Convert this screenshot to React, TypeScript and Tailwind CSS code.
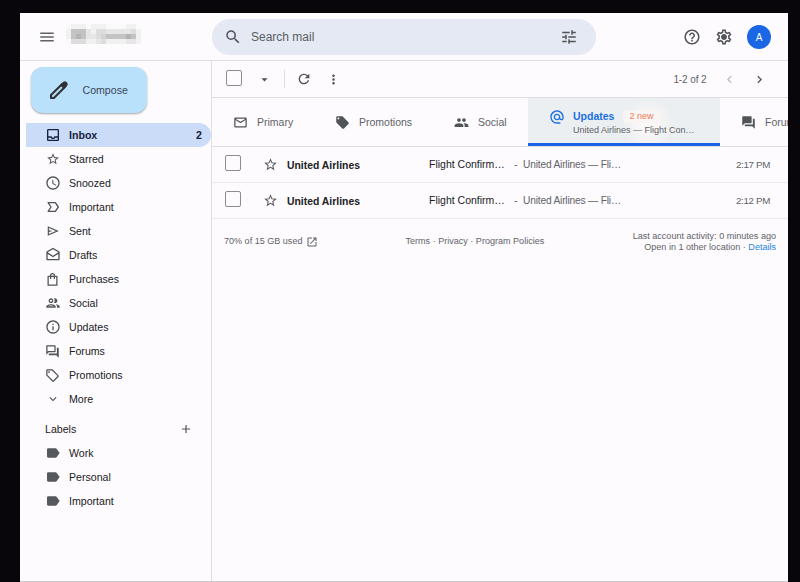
import type { ReactNode } from 'react';
import type { IconType } from 'react-icons';
import {
  MdAccessTime,
  MdAdd,
  MdAlternateEmail,
  MdArrowDropDown,
  MdChevronLeft,
  MdChevronRight,
  MdExpandMore,
  MdForum,
  MdGroup,
  MdHelpOutline,
  MdLabel,
  MdLocalOffer,
  MdMenu,
  MdMoreVert,
  MdOpenInNew,
  MdOutlineDrafts,
  MdOutlineForum,
  MdOutlineGroup,
  MdOutlineInbox,
  MdOutlineInfo,
  MdOutlineLocalOffer,
  MdOutlineMail,
  MdOutlineSettings,
  MdRefresh,
  MdSearch,
  MdStarBorder,
  MdTune,
} from 'react-icons/md';

interface IconProps {
  className?: string;
}

function PenIcon({ className }: IconProps) {
  return (
    <svg viewBox="0 0 20 20" className={className} fill="none" stroke="currentColor">
      <path d="M2 18v-2.900L13.200 3.900l2.900 2.900L4.900 18z" strokeWidth="2.100" strokeLinejoin="round" />
      <path
        d="M12.200 5.100l2.500-2.500q1.100-1 2.200 0l.5.5q1 1.100 0 2.200l-2.500 2.500z"
        fill="currentColor"
        strokeWidth="1.800"
        strokeLinejoin="round"
      />
    </svg>
  );
}

function SendIcon({ className }: IconProps) {
  return (
    <svg viewBox="0 0 24 24" className={className} fill="currentColor">
      <path d="M3 20V4l19 8zm2-3 11.850-5L5 7v3.500l6 1.500-6 1.500z" />
    </svg>
  );
}

function BagIcon({ className }: IconProps) {
  return (
    <svg viewBox="0 0 24 24" className={className} fill="none" stroke="currentColor" strokeWidth="2">
      <path d="M5 7h14v14H5z" strokeLinejoin="round" />
      <path d="M9 11V5.500a3 3 0 0 1 6 0V11" />
    </svg>
  );
}

function ImportantIcon({ className }: IconProps) {
  return (
    <svg viewBox="0 0 24 24" className={className} fill="none" stroke="currentColor" strokeWidth="2">
      <path d="M4.700 5.500H15.500L20 12l-4.500 6.500H4.700L9 12z" strokeLinejoin="round" />
    </svg>
  );
}

function GearIcon({ className }: IconProps) {
  return (
    <svg viewBox="0 0 24 24" className={className}>
      <MdOutlineSettings size={24} />
      <circle cx="12" cy="12" r="3" fill="currentColor" />
    </svg>
  );
}

type AnyIcon = IconType | ((props: IconProps) => ReactNode);

const folders: { name: string; icon: AnyIcon; count?: number; size?: string }[] = [
  { name: 'Inbox', icon: MdOutlineInbox, count: 2 },
  { name: 'Starred', icon: MdStarBorder, size: 'size-[14px] mx-px' },
  { name: 'Snoozed', icon: MdAccessTime },
  { name: 'Important', icon: ImportantIcon },
  { name: 'Sent', icon: SendIcon, size: 'size-[14px] mx-px' },
  { name: 'Drafts', icon: MdOutlineDrafts },
  { name: 'Purchases', icon: BagIcon, size: 'size-[15px] mr-px' },
  { name: 'Social', icon: MdOutlineGroup },
  { name: 'Updates', icon: MdOutlineInfo },
  { name: 'Forums', icon: MdOutlineForum, size: 'size-[15px] mr-px' },
  { name: 'Promotions', icon: MdOutlineLocalOffer, size: 'size-[15px] mr-px' },
  { name: 'More', icon: MdExpandMore, size: 'size-[14px] mx-px' },
];

const labels = ['Work', 'Personal', 'Important'];

const mails = [
  { id: 1, from: 'United Airlines', time: '2:17 PM' },
  { id: 2, from: 'United Airlines', time: '2:12 PM' },
];

// pixelated account name, one character per block, darker towards 6
const mosaic = ['011101110000110', '155521332222231', '156522345555651', '033311231111221'];

const shades = [
  'bg-[#fafafa]',
  'bg-[#f1f1f1]',
  'bg-[#e6e6e6]',
  'bg-[#dddddd]',
  'bg-[#d2d2d2]',
  'bg-[#c3c3c3]',
  'bg-[#b4b4b4]',
];

function Header() {
  return (
    <header className="flex h-12 shrink-0 items-center border-b border-[#dfdfe2]">
      <MdMenu className="ml-[18px] size-[18px] text-[#5f6368]" />
      <div className="mb-[5px] ml-[10px] grid w-[75px] grid-cols-[repeat(15,5px)]">
        {mosaic
          .join('')
          .split('')
          .map((c, i) => (
            <span key={i} className={`h-[5px] ${shades[Number(c)]}`} />
          ))}
      </div>
      <div className="ml-[71px] flex h-9 w-[384px] items-center rounded-full bg-[#e4e9f3] pr-[18px] pl-3">
        <MdSearch className="size-[18px] text-[#505357]" />
        <span className="ml-[9px] flex-1 text-[12px] text-[#5a5d62]">Search mail</span>
        <MdTune className="size-[18px] text-[#505357]" />
      </div>
      <MdHelpOutline className="ml-[87px] size-[18px] text-[#505357]" />
      <GearIcon className="ml-[13.5px] size-[18px] text-[#505357]" />
      <div className="ml-[14.5px] flex size-6 items-center justify-center rounded-full bg-[#1a66e5] pt-px text-[10px] text-white">
        A
      </div>
    </header>
  );
}

function Sidebar() {
  return (
    <aside className="w-48 shrink-0 border-r border-[#dfdfe2] pt-1.5 text-[10.6px] text-[#202124]">
      <button className="ml-[11px] flex h-[46px] w-[116px] items-center rounded-xl bg-[#b9e1fc] pl-[18px] text-[#3c4654] shadow-[0_1px_2px_rgba(0,0,0,0.35)]">
        <PenIcon className="size-5 text-[#2f3337]" />
        <span className="ml-[13.5px] pt-px">Compose</span>
      </button>
      <nav className="mt-2.5 ml-1.5">
        {folders.map(({ name, icon: Icon, count, size = 'size-4' }) => (
          <div
            key={name}
            className={`flex h-6 items-center rounded-r-full pr-[9px] pl-[19px] ${count ? 'bg-[#cbdcf9] font-bold text-[#15233b]' : ''}`}
          >
            <Icon className={`${size} ${count ? 'text-[#15233b]' : 'text-[#505357]'}`} />
            <span className="ml-2 flex-1 pt-0.5">{name}</span>
            {count && <span className="pt-px">{count}</span>}
          </div>
        ))}
      </nav>
      <div className="mt-1.5 flex h-6 items-center pr-[18px] pl-[25px]">
        <span className="flex-1 pt-0.5">Labels</span>
        <MdAdd className="size-[14px] text-[#505357]" />
      </div>
      {labels.map((label) => (
        <div key={label} className="flex h-6 items-center pl-[25px]">
          <MdLabel className="size-4 text-[#55585d]" />
          <span className="ml-2 pt-0.5">{label}</span>
        </div>
      ))}
    </aside>
  );
}

function Toolbar() {
  return (
    <div className="flex h-[37px] shrink-0 items-center border-b border-[#dfdfe2] text-[#505357]">
      <span className="mb-[3px] ml-[14px] size-4 rounded-[2px] border border-[#8a8c90]" />
      <MdArrowDropDown className="ml-[15px] size-[15px]" />
      <span className="ml-3 h-[18px] w-px bg-[#dfdfe2]" />
      <MdRefresh className="ml-[11px] size-4" />
      <MdMoreVert className="ml-[14px] size-[15px]" />
      <span className="flex-1" />
      <span className="pt-px text-[10px] tracking-[-0.1px] text-[#5f6368]">1-2 of 2</span>
      <MdChevronLeft className="ml-[15px] size-[15px] text-[#b9bbbe]" />
      <MdChevronRight className="mr-[21.500px] ml-[15px] size-[15px]" />
    </div>
  );
}

function Tabs() {
  return (
    <div className="flex h-[49px] shrink-0 overflow-hidden border-b border-[#dfdfe2] text-[10.5px] text-[#5f6368]">
      <div className="flex w-[102px] shrink-0 items-center pl-[21px]">
        <MdOutlineMail className="size-[15px] text-[#505357]" />
        <span className="ml-[9px] pt-0.5">Primary</span>
      </div>
      <div className="flex w-[119px] shrink-0 items-center pl-[21px]">
        <MdLocalOffer className="size-[15px] text-[#505357]" />
        <span className="ml-[9px] pt-0.5">Promotions</span>
      </div>
      <div className="flex w-[95px] shrink-0 items-center pl-[21px]">
        <MdGroup className="size-[15px] text-[#505357]" />
        <span className="ml-[9px] pt-0.5">Social</span>
      </div>
      <div className="flex w-48 shrink-0 border-b-[3px] border-[#1a62e8] bg-[#eceff1] bg-[radial-gradient(circle_at_120px_26px,#faf7f7_8px,transparent_25px)] pt-[11px] pl-[20.500px]">
        <MdAlternateEmail className="size-4 text-[#1a6fe5]" />
        <div className="ml-[8.500px]">
          <div className="flex h-[15px] items-center">
            <span className="font-bold text-[#1a6fe5]">Updates</span>
            <span className="ml-[9px] rounded-[3px] bg-[#f8f5f4] px-[6px] text-[9px] leading-[13px] text-[#ee7a52]">
              2 new
            </span>
          </div>
          <div className="text-[9px] leading-[12px]">United Airlines — Flight Con…</div>
        </div>
      </div>
      <div className="flex shrink-0 items-center pl-[21px]">
        <MdForum className="size-[15px] text-[#505357]" />
        <span className="ml-[9px] pt-0.5">Forums</span>
      </div>
    </div>
  );
}

function MailList() {
  return (
    <div>
      {mails.map((mail) => (
        <div
          key={mail.id}
          className="flex h-9 items-center border-b border-[#ebebee] text-[10.5px] text-[#202124]"
        >
          <span className="mb-[3px] ml-[13px] size-4 rounded-[2px] border border-[#8a8c90]" />
          <MdStarBorder className="ml-[22px] size-[15px] text-[#505357]" />
          <span className="ml-[9px] w-[142px] pt-0.5 text-[10.4px] font-bold">{mail.from}</span>
          <span className="w-[85px] pt-px">Flight Confirm…</span>
          <span className="w-[9px] pt-px text-[#5f6368]">-</span>
          <span className="flex-1 pt-px text-[10.2px] tracking-[-0.18px] text-[#5f6368]">United Airlines — Fli…</span>
          <span className="mr-[18px] pt-px text-[9.800px] tracking-[-0.35px] text-[#5f6368]">{mail.time}</span>
        </div>
      ))}
    </div>
  );
}

function Footer() {
  return (
    <footer className="mt-3 flex items-center justify-between pr-3 pl-3 text-[9.05px] leading-[10.5px] text-[#5f6368]">
      <div className="flex w-[181.5px] items-center">
        70% of 15 GB used
        <MdOpenInNew className="ml-1 size-3" />
      </div>
      <div className="flex-1">Terms · Privacy · Program Policies</div>
      <div className="text-right">
        <div>Last account activity: 0 minutes ago</div>
        <div>
          Open in 1 other location · <span className="text-[#2783e0]">Details</span>
        </div>
      </div>
    </footer>
  );
}

function App() {
  return (
    <div className="h-[582px] w-[800px] overflow-hidden bg-[#08060a] pt-[13px] pr-3 pl-5 font-['Liberation_Sans',Arial,sans-serif]">
      <div className="flex h-[569px] flex-col border-b border-[#c9c9cc] bg-[#fdfbfe]">
        <Header />
        <div className="flex min-h-0 flex-1">
          <Sidebar />
          <main className="flex min-w-0 flex-1 flex-col">
            <Toolbar />
            <Tabs />
            <MailList />
            <Footer />
          </main>
        </div>
      </div>
    </div>
  );
}

export default App;
